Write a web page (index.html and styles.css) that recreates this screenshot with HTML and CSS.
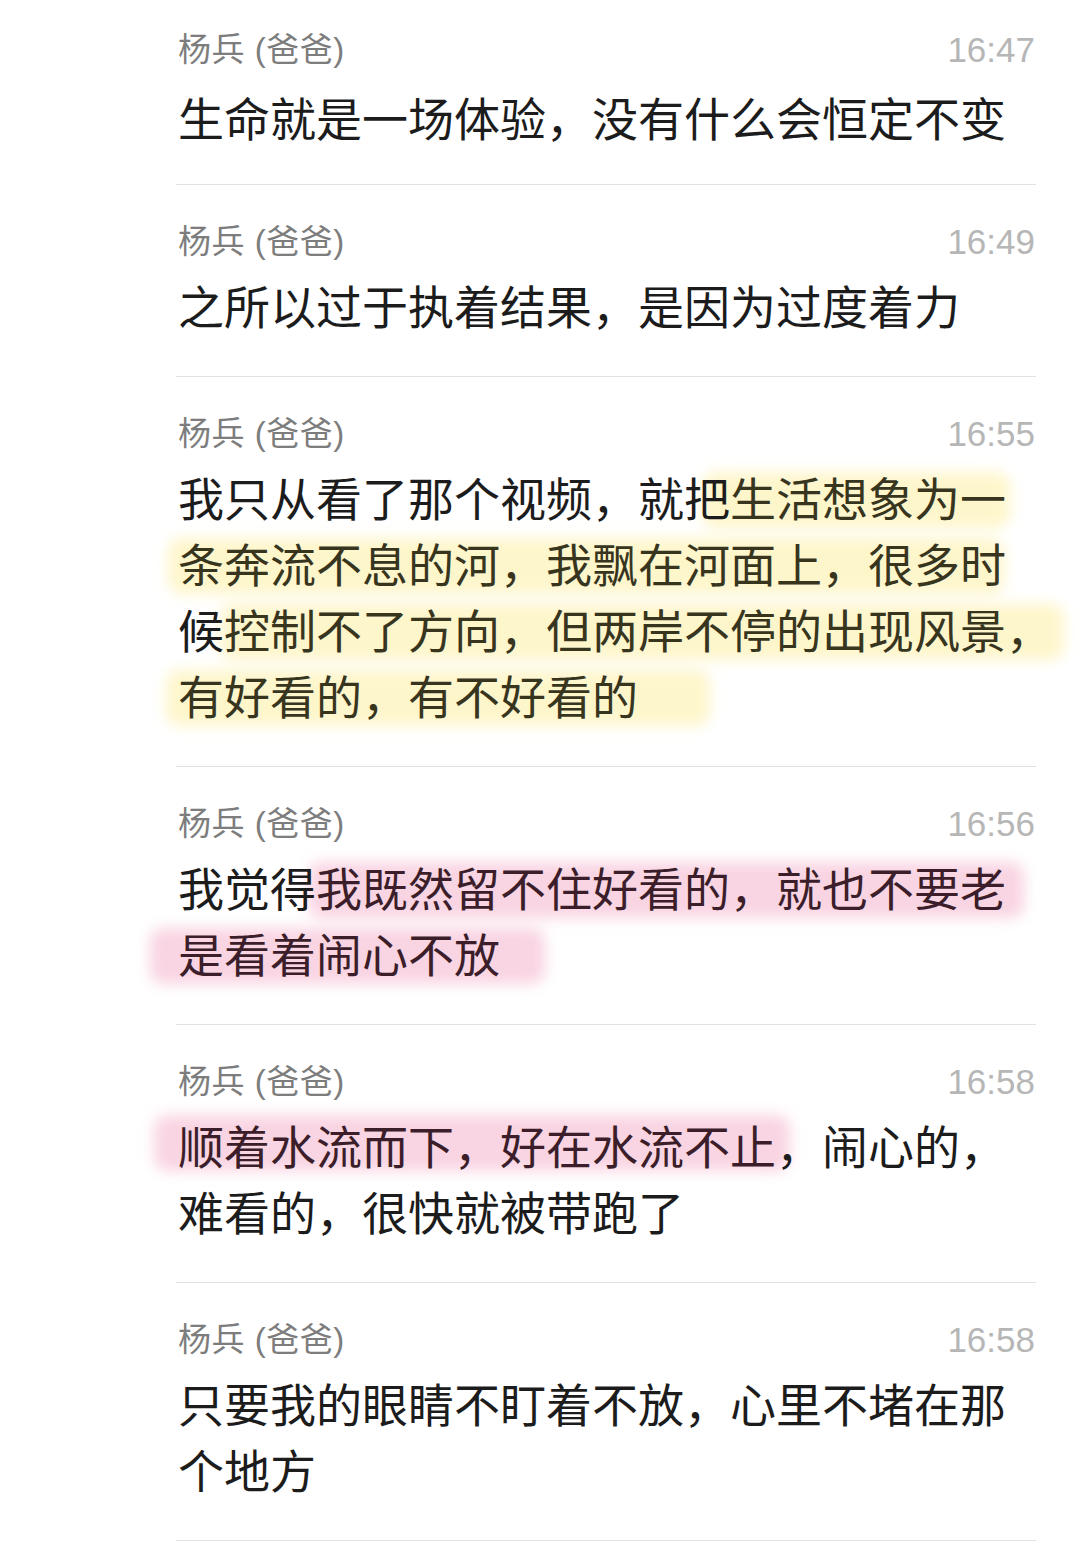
FILE: index.html
```html
<!DOCTYPE html>
<html lang="zh-CN">
<head>
<meta charset="utf-8">
<title>杨兵 (爸爸)</title>
<link rel="stylesheet" href="styles.css">
</head>
<body>
<div class="list">
  <div class="item first">
    <div class="meta"><span class="name">杨兵 (爸爸)</span><span class="time">16:47</span></div>
    <div class="text">生命就是一场体验，没有什么会恒定不变</div>
  </div>
  <div class="item">
    <div class="meta"><span class="name">杨兵 (爸爸)</span><span class="time">16:49</span></div>
    <div class="text">之所以过于执着结果，是因为过度着力</div>
  </div>
  <div class="item">
    <div class="meta"><span class="name">杨兵 (爸爸)</span><span class="time">16:55</span></div>
    <div class="text">我只从看了那个视频，就把<span class="hl y y1">生活想象为一</span><br><span class="hl y y2">条奔流不息的河，我飘在河面上，很多时</span><br>候<span class="hl y y3">控制不了方向，但两岸不停的出现风景，</span><br><span class="hl y y4">有好看的，有不好看的</span></div>
  </div>
  <div class="item">
    <div class="meta"><span class="name">杨兵 (爸爸)</span><span class="time">16:56</span></div>
    <div class="text">我觉得<span class="hl p p1">我既然留不住好看的，就也不要老</span><br><span class="hl p p2">是看着闹心不放</span></div>
  </div>
  <div class="item">
    <div class="meta"><span class="name">杨兵 (爸爸)</span><span class="time">16:58</span></div>
    <div class="text"><span class="hl p p3">顺着水流而下，好在水流不止</span>，闹心的，<br>难看的，很快就被带跑了</div>
  </div>
  <div class="item">
    <div class="meta"><span class="name">杨兵 (爸爸)</span><span class="time">16:58</span></div>
    <div class="text">只要我的眼睛不盯着不放，心里不堵在那<br>个地方</div>
  </div>
</div>
</body>
</html>
```

FILE: styles.css
```css
html, body {
  margin: 0;
  padding: 0;
  background: #ffffff;
}

body {
  width: 1080px;
  height: 1557px;
  overflow: hidden;
  font-family: "Noto Sans CJK SC", "Liberation Sans", sans-serif;
}

.list {
  margin-left: 176px;
  width: 860px;
}

.item {
  padding: 35px 0 39px 2px;
  border-bottom: 1px solid #e2e2e2;
}

.item.first {
  padding-top: 28px;
  padding-bottom: 35px;
}

.item.first .text {
  margin-top: 11px;
}

.meta {
  display: flex;
  justify-content: space-between;
  align-items: center;
  height: 44px;
}

.name {
  font-family: "Liberation Sans", "Noto Sans CJK SC", sans-serif;
  font-size: 33px;
  letter-spacing: 0.5px;
  color: #7d7d7d;
  line-height: 44px;
}

.time {
  font-family: "Liberation Sans", sans-serif;
  font-size: 35px;
  color: #b6b6b6;
  line-height: 44px;
  padding-right: 1px;
}

.text {
  margin-top: 7px;
  font-size: 46px;
  line-height: 66px;
  color: #1c1c1c;
  white-space: nowrap;
  position: relative;
  z-index: 0;
}

.hl {
  position: relative;
  display: inline-block;
  line-height: 66px;
  vertical-align: top;
}

.hl::before {
  content: "";
  position: absolute;
  top: 9px;
  bottom: 1px;
  left: 0;
  right: 0;
  border-radius: 14px;
  filter: blur(7px);
  z-index: -1;
}

.y { color: #38351f; }
.y::before { background: rgba(253, 238, 160, 0.55); }

.p { color: #3b1e2a; }
.p::before { background: rgba(243, 170, 198, 0.5); }

.y1::before { left: -28px; right: -4px; }
.y2::before { left: -10px; right: 2px; }
.y3::before { left: -4px; right: -12px; }
.y4::before { left: -12px; right: -72px; }

.p1::before { left: -8px; right: -18px; }
.p2::before { left: -28px; right: -45px; }
.p3::before { left: -24px; right: -14px; top: 4px; bottom: 6px; }
```
